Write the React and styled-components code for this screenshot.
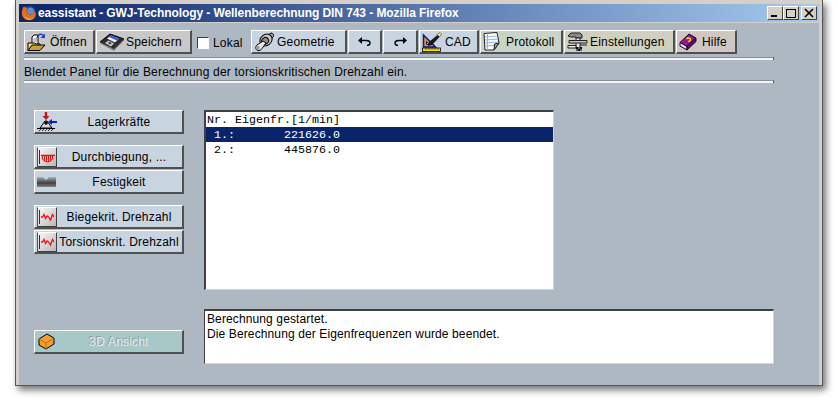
import React from "react";
import styled, { createGlobalStyle } from "styled-components";

const GlobalStyle = createGlobalStyle`
  html, body { margin: 0; padding: 0; background: #ffffff; }
  body { font-family: "Liberation Sans", Arial, sans-serif; font-size: 12px; color: #000; }
`;

const Page = styled.div`
  width: 838px;
  height: 401px;
  padding-left: 15px;
  box-sizing: border-box;
  overflow: hidden;
`;

const Frame = styled.div`
  width: 808px;
  height: 386px;
  box-sizing: border-box;
  padding: 4px 3px 0 3px;
  background: #d4d0c8;
  border: 1px solid #555555;
  border-top: 0;
  box-shadow: 3px 4px 7px rgba(0, 0, 0, 0.55);
  display: flex;
  flex-direction: column;
`;

const TitleBar = styled.div`
  height: 18px;
  flex-shrink: 0;
  display: flex;
  align-items: center;
  padding: 0 2px;
  background: linear-gradient(90deg, #0a246a 0%, #a6caf0 100%);
`;

const TitleText = styled.span`
  margin-left: 1px;
  color: #ffffff;
  font-weight: 700;
  font-size: 12px;
  letter-spacing: -0.08px;
  flex: 1;
`;

const WinButtons = styled.div`
  display: flex;
`;

const WinButton = styled.div`
  width: 16px;
  height: 14px;
  box-sizing: border-box;
  margin-left: ${(p) => p.$gap || 0}px;
  background: #d4d0c8;
  border: 1px solid;
  border-color: #ffffff #404040 #404040 #ffffff;
  display: flex;
  align-items: center;
  justify-content: center;
`;

const Panel = styled.div`
  flex: 1;
  margin-top: 1px;
  background: #aeb8c2;
  padding: 7px 45px 0 5px;
  display: flex;
  flex-direction: column;
`;

const Toolbar = styled.div`
  display: flex;
  align-items: center;
  gap: 1px;
  height: 24px;
`;

const Button = styled.div`
  box-sizing: border-box;
  width: ${(p) => (p.$w ? `${p.$w}px` : "auto")};
  height: 24px;
  flex-shrink: 0;
  display: flex;
  align-items: center;
  justify-content: ${(p) => (p.$center ? "center" : "flex-start")};
  background: ${(p) => p.$bg || "#c8d4e0"};
  border-style: solid;
  border-width: 1px 2px 2px 1px;
  border-color: #ffffff #505050 #505050 #ffffff;
  font-size: 12px;
  letter-spacing: 0.19px;
  white-space: nowrap;
`;

const ToolIcon = styled.span`
  width: ${(p) => p.$slot || 25}px;
  flex-shrink: 0;
  padding-left: 2px;
  box-sizing: border-box;
  display: flex;
  align-items: center;
`;

const CheckField = styled.label`
  display: flex;
  align-items: center;
  width: 53px;
  margin-left: 4px;
  gap: 4px;
  letter-spacing: 0.19px;
`;

const CheckBox = styled.span`
  width: 12px;
  height: 12px;
  box-sizing: border-box;
  margin-top: 1px;
  background: #ffffff;
  border: 1px solid;
  border-color: #404040 #ffffff #ffffff #404040;
`;

const CheckLabel = styled.span`
  margin-top: 2px;
`;

const Separator = styled.div`
  height: 3px;
  box-sizing: border-box;
  margin-top: ${(p) => p.$top || 0}px;
  background: #f4f4f4;
  border-top: 1px solid #8a8f94;
  border-right: 1px solid #505050;
`;

const Status = styled.div`
  height: 20px;
  line-height: 24px;
  font-size: 12px;
  letter-spacing: 0.19px;
`;

const Main = styled.div`
  display: grid;
  grid-template-columns: 150px 1fr;
  column-gap: 20px;
  margin-top: 27px;
  padding-left: 10px;
`;

const Side = styled.div`
  display: flex;
  flex-direction: column;
  gap: 11px;
  height: 244px;
`;

const Group = styled.div`
  display: flex;
  flex-direction: column;
  gap: 1px;
`;

const SideButton = styled(Button)`
  width: 150px;
  padding: 0 1px;
  color: ${(p) => (p.$disabled ? "#e4ecec" : "#000")};
  text-shadow: ${(p) => (p.$disabled ? "-1px -1px 0 #8e9ea0" : "none")};
`;

const SideIcon = styled.span`
  width: 21px;
  height: 20px;
  flex-shrink: 0;
  display: flex;
  align-items: center;
  justify-content: center;
`;

const SideLabel = styled.span`
  flex: 1;
  text-align: center;
`;

const Spacer = styled.div`
  flex: 1;
`;

const Content = styled.div`
  display: flex;
  flex-direction: column;
  gap: 19px;
`;

const ListBox = styled.div`
  width: 350px;
  height: 180px;
  box-sizing: border-box;
  background: #ffffff;
  border-style: solid;
  border-width: 2px 1px 1px 2px;
  border-color: #404040 #d8d4cc #d8d4cc #404040;
  font-family: "Liberation Mono", "Courier New", monospace;
  font-size: 11.67px;
`;

const ListRow = styled.div`
  height: 15px;
  line-height: 17px;
  padding-left: 1px;
  white-space: pre;
  color: ${(p) => (p.$selected ? "#ffffff" : "#000000")};
  background: ${(p) => (p.$selected ? "#0a246a" : "transparent")};
`;

const LogBox = styled.div`
  width: 570px;
  height: 55px;
  box-sizing: border-box;
  padding: 1px 2px;
  background: #ffffff;
  border-style: solid;
  border-width: 2px 1px 1px 1px;
  border-color: #404040 #d8d4cc #d8d4cc #404040;
  line-height: 15px;
  font-size: 12px;
  letter-spacing: 0.12px;
`;

const FirefoxIcon = () => (
  <svg width="16" height="16" viewBox="0 0 16 16">
    <circle cx="8" cy="8" r="7.200" fill="#24417f" />
    <circle cx="9.500" cy="6" r="3.500" fill="#5d8fd0" />
    <path d="M3 1 C4 3 5 3 7 2.500 C5 4 5 8 8 9.500 C11 10.500 13.500 8.500 12.500 5 C15.500 8 15.500 12 12 14.300 C8 16.300 3 15 1.300 11 C0.300 8 1 4 3 1Z" fill="#e46c1c" />
    <path d="M2.500 9 C4 13 9 15 13 12.500 C10 16 4 15.500 2.500 9Z" fill="#f6b030" />
  </svg>
);

const OpenIcon = () => (
  <svg width="20" height="20" viewBox="0 0 20 20">
    <path d="M5 14 V5 L7 3 H11 V14Z" fill="#ffffff" stroke="#000" />
    <path d="M6.500 7 H10 M6.500 9 H10" stroke="#808080" />
    <path d="M1 18.500 V11 H8 L9 12 H13 V14 L10 18.500Z" fill="#f4e070" stroke="#000" />
    <path d="M1 18.500 L5 13 H18 L13 18.500Z" fill="#c8a030" stroke="#000" />
    <path d="M10 6 C10.500 2.500 14 1 16.500 3.500" fill="none" stroke="#1840c8" strokeWidth="1.500" />
    <path d="M18 1.500 V6 H13.500Z" fill="#1840c8" />
  </svg>
);

const SaveIcon = () => (
  <svg width="26" height="18" viewBox="0 0 26 18">
    <path d="M1 9 L11 1 L25 6 L15 17Z" fill="#2c2c2c" stroke="#000" />
    <path d="M1 9 L15 16 L25 6 V7.500 L15 17.800 L1 10.500Z" fill="#808080" />
    <path d="M8 5.500 L12 2.500 L20 5.500 L16 9.500Z" fill="#f4f4f4" />
    <path d="M10 4 L12 2.500 L20 5.500 L18 7.500Z" fill="#2858e8" />
    <path d="M6 10 L9.500 7.500 L15 10.500 L12 13.500Z" fill="#c8c8c8" />
    <path d="M9 10 L10.500 9 L12.500 10.300 L11 11.500Z" fill="#2c2c2c" />
  </svg>
);

const GearIcon = () => (
  <svg width="21" height="21" viewBox="0 0 21 21">
    <path d="M13 5 L17 2 C19 2 20 4 19.500 5.500 L16 9Z" fill="#a8a8a8" stroke="#000" />
    <ellipse cx="12" cy="9" rx="6.500" ry="5.500" transform="rotate(-40 12 9)" fill="#c8c8c8" stroke="#000" />
    <ellipse cx="11" cy="10" rx="3.800" ry="3.200" transform="rotate(-40 11 10)" fill="#8c8c8c" stroke="#000" />
    <path d="M9 10 L3 14 C1 16 1.500 19 4 19.500 C5.500 20 7 19 8 17.500 L12 12Z" fill="#e4e4e4" stroke="#000" />
    <ellipse cx="4" cy="17" rx="1.800" ry="2" fill="#9c9c9c" />
  </svg>
);

const UndoIcon = ({ flip }) => (
  <svg width="13" height="9" viewBox="0 0 13 9" style={flip ? { transform: "scaleX(-1)" } : undefined}>
    <path d="M0 3.500 L4 0 V7Z" fill="#000" />
    <path d="M3.500 3.500 H8 C11 3.500 12 5 12 6 C12 7.500 11 8.500 9 8.500" fill="none" stroke="#000" strokeWidth="1.400" />
  </svg>
);

const CadIcon = () => (
  <svg width="20" height="20" viewBox="0 0 20 20">
    <path d="M1.500 3 V15 H13.500Z" fill="#e89020" stroke="#101880" strokeWidth="1.500" />
    <path d="M4.500 9.500 V12.500 H7.500Z" fill="#c8d4e0" stroke="#101880" />
    <path d="M7 10 L16 2.500 L18 4.500 L10 13 L6 14Z" fill="#181818" />
    <path d="M15 2.500 L18 0.500 L19.500 2 L17.500 5Z" fill="#f0e878" stroke="#303020" strokeWidth="0.500" />
    <rect x="0.500" y="16" width="18" height="3.500" fill="#f4e020" stroke="#000" strokeWidth="0.800" />
    <path d="M4 16 V18 M7 16 V18 M10 16 V18 M13 16 V18 M16 16 V18" stroke="#000" strokeWidth="0.600" />
  </svg>
);

const NoteIcon = () => (
  <svg width="18" height="19" viewBox="0 0 18 19">
    <path d="M1 1.500 L14 0.500 L16 11 L11 18 L2 18Z" fill="#fdfdfd" stroke="#202020" />
    <path d="M2 5 L14.500 4 M2 8 L15 7 M2 11 L15 10 M2 14 L11 13.500" stroke="#90b4ec" />
    <path d="M4.500 1.500 V18" stroke="#f09090" />
    <path d="M11 18 L11.500 12 L16 11Z" fill="#a0a0a0" stroke="#202020" />
  </svg>
);

const ToolsIcon = () => (
  <svg width="21" height="20" viewBox="0 0 21 20">
    <path d="M1 4 L4 1 H13 L15 3 V6 H9 V5 H4Z" fill="#8c8c8c" stroke="#202020" />
    <rect x="9" y="6" width="4" height="10" fill="#e8e8e8" stroke="#202020" />
    <path d="M2 8.500 H20 V11 H2Z" fill="#c8c8c8" stroke="#202020" />
    <path d="M1 13.500 H9 V16 H1Z" fill="#f0f0f0" stroke="#202020" />
    <path d="M13 13 H20" stroke="#202020" />
    <path d="M9 15 H15 V19 H9Z" fill="#606060" />
    <path d="M9 15 h2 v2 h-2Z M13 15 h2 v2 h-2Z M11 17 h2 v2 h-2Z" fill="#101010" />
  </svg>
);

const BookIcon = () => (
  <svg width="18" height="18" viewBox="0 0 18 18">
    <path d="M1 9.500 L10 1 L17 5 L8 13.500Z" fill="#90188c" stroke="#200030" />
    <path d="M1 9.500 L8 13.500 L8 17 L1 13Z" fill="#e8d8e8" stroke="#200030" />
    <path d="M8 13.500 L17 5 L17 8.500 L8 17Z" fill="#601068" stroke="#200030" />
    <path d="M7.500 6 C8.500 4.500 11.500 4.500 11.500 6.500 C11.500 8 9.500 8 9.500 9" fill="none" stroke="#f0e020" strokeWidth="1.400" />
  </svg>
);

const BearingIcon = () => (
  <svg width="20" height="20" viewBox="0 0 20 20">
    <path d="M9 0 V5" stroke="#c01818" strokeWidth="2.400" />
    <path d="M5.500 4 H12.500 L9 8Z" fill="#c01818" />
    <path d="M14 10 H20" stroke="#1818c0" strokeWidth="2" />
    <path d="M15 7 V13 L11 10Z" fill="#1818c0" />
    <path d="M3 16 L8 9 H10 L15 16Z" fill="#d8d8d8" stroke="#000" />
    <circle cx="9" cy="11" r="1.800" fill="#000" />
    <path d="M0 16.500 H18" stroke="#000" />
    <path d="M2 19 L4 17 M5 19 L7 17 M8 19 L10 17 M11 19 L13 17 M14 19 L16 17" stroke="#000" strokeWidth="0.800" />
  </svg>
);

const PlotFrame = styled.span`
  width: 20px;
  height: 20px;
  box-sizing: border-box;
  display: flex;
  background: linear-gradient(135deg, #f8f8f8, #b8b8b8);
  border: 1px solid;
  border-color: #ffffff #404040 #404040 #505050;
`;

const BendIcon = () => (
  <PlotFrame>
    <svg width="18" height="18" viewBox="0 0 18 18">
      <path d="M1.500 2 V16" stroke="#303030" />
      <path d="M3 7.500 H17" stroke="#e01010" strokeWidth="1.500" />
      <path d="M4.500 8 V11 M6.500 8 V13 M8.500 8 V14 M10.500 8 V14 M12.500 8 V13 M14.500 8 V11 M4 10.500 C7 15 12 15 15 10.500" stroke="#e01010" fill="none" />
    </svg>
  </PlotFrame>
);

const WaveIcon = () => (
  <PlotFrame>
    <svg width="18" height="18" viewBox="0 0 18 18">
      <path d="M1.500 2 V16" stroke="#303030" />
      <path d="M3 9 H4.500 L6 6.500 L7.500 10.500 L9 8 L10.500 9 L12.500 12 L14.500 6.500 L16 9" stroke="#f01010" fill="none" strokeWidth="1.300" />
    </svg>
  </PlotFrame>
);

const ShaftIcon = () => (
  <svg width="19" height="10" viewBox="0 0 19 10">
    <defs>
      <linearGradient id="shaftShade" x1="0" y1="0" x2="0" y2="1">
        <stop offset="0" stopColor="#b0b0b0" />
        <stop offset="0.6" stopColor="#404040" />
        <stop offset="1" stopColor="#808080" />
      </linearGradient>
    </defs>
    <path d="M0 0 H6 L9 3 L12 0 H19 V10 H0Z" fill="url(#shaftShade)" />
  </svg>
);

const CubeIcon = () => (
  <svg width="17" height="17" viewBox="0 0 17 17">
    <path d="M1 6 L9 1 L16 5 V11 L8 16 L1 12Z" fill="#f0a030" stroke="#000" />
    <path d="M1 6 L8 10 L16 5 M8 10 V16" fill="none" stroke="#c07010" />
  </svg>
);

const rows = [
  { text: "Nr. Eigenfr.[1/min]" },
  { text: " 1.:       221626.0", selected: true },
  { text: " 2.:       445876.0" },
];

const App = () => (
  <>
    <GlobalStyle />
    <Page>
      <Frame>
        <TitleBar>
          <FirefoxIcon />
          <TitleText>eassistant - GWJ-Technology - Wellenberechnung DIN 743 - Mozilla Firefox</TitleText>
          <WinButtons>
            <WinButton>
              <svg width="10" height="10" viewBox="0 0 10 10"><rect x="1" y="7" width="6" height="2" fill="#000" /></svg>
            </WinButton>
            <WinButton>
              <svg width="10" height="10" viewBox="0 0 10 10"><path d="M0.500 1.500 H9.500 V9.500 H0.500Z M0 1.500 H10" fill="none" stroke="#000" /></svg>
            </WinButton>
            <WinButton $gap={2}>
              <svg width="10" height="10" viewBox="0 0 10 10"><path d="M1 1 L9 9 M9 1 L1 9" stroke="#000" strokeWidth="1.600" /></svg>
            </WinButton>
          </WinButtons>
        </TitleBar>
        <Panel>
          <Toolbar>
            <Button $w={71} $bg="#c8c8c8"><ToolIcon><OpenIcon /></ToolIcon>Öffnen</Button>
            <Button $w={96} $bg="#c8c8c8"><ToolIcon $slot={29}><SaveIcon /></ToolIcon>Speichern</Button>
            <CheckField><CheckBox /><CheckLabel>Lokal</CheckLabel></CheckField>
            <Button $w={96}><ToolIcon><GearIcon /></ToolIcon>Geometrie</Button>
            <Button $w={34} $center><UndoIcon /></Button>
            <Button $w={35} $center><UndoIcon flip /></Button>
            <Button $w={60}><ToolIcon><CadIcon /></ToolIcon>CAD</Button>
            <Button $w={83} $bg="#c8d4c8"><ToolIcon><NoteIcon /></ToolIcon>Protokoll</Button>
            <Button $w={111} $bg="#d0d0c0"><ToolIcon><ToolsIcon /></ToolIcon>Einstellungen</Button>
            <Button $w={61} $bg="#d0c8c0"><ToolIcon><BookIcon /></ToolIcon>Hilfe</Button>
          </Toolbar>
          <Separator $top={3} />
          <Status>Blendet Panel für die Berechnung der torsionskritischen Drehzahl ein.</Status>
          <Separator />
          <Main>
            <Side>
              <Group>
                <SideButton><SideIcon><BearingIcon /></SideIcon><SideLabel>Lagerkräfte</SideLabel></SideButton>
              </Group>
              <Group>
                <SideButton><SideIcon><BendIcon /></SideIcon><SideLabel>Durchbiegung, ...</SideLabel></SideButton>
                <SideButton><SideIcon><ShaftIcon /></SideIcon><SideLabel>Festigkeit</SideLabel></SideButton>
              </Group>
              <Group>
                <SideButton><SideIcon><WaveIcon /></SideIcon><SideLabel>Biegekrit. Drehzahl</SideLabel></SideButton>
                <SideButton><SideIcon><WaveIcon /></SideIcon><SideLabel>Torsionskrit. Drehzahl</SideLabel></SideButton>
              </Group>
              <Spacer />
              <SideButton $bg="#a8c8c8" $disabled><SideIcon><CubeIcon /></SideIcon><SideLabel>3D Ansicht</SideLabel></SideButton>
            </Side>
            <Content>
              <ListBox>
                {rows.map((row) => (
                  <ListRow key={row.text} $selected={row.selected}>{row.text}</ListRow>
                ))}
              </ListBox>
              <LogBox>
                Berechnung gestartet.
                <br />
                Die Berechnung der Eigenfrequenzen wurde beendet.
              </LogBox>
            </Content>
          </Main>
        </Panel>
      </Frame>
    </Page>
  </>
);

export default App;
